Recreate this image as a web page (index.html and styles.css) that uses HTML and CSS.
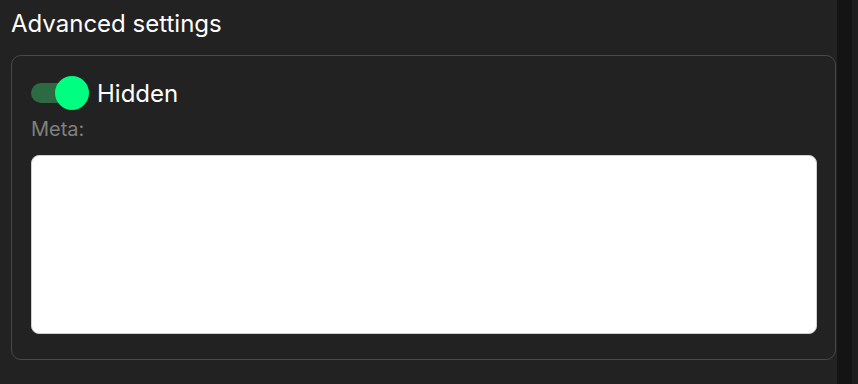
FILE: index.html
```html
<!doctype html>
<html>
<head>
    <meta charset="utf-8">
    <link rel="stylesheet" href="styles.css">
</head>
<body>
<div class="page">
    <div class="main">
        <h2 class="title">Advanced settings</h2>
        <div class="card">
            <label class="switch">
                <input type="checkbox" checked>
                <span class="track"><span class="thumb"></span></span>
                <span class="switch-label">Hidden</span>
            </label>
            <div class="field-label">Meta:</div>
            <textarea class="meta"></textarea>
        </div>
    </div>
    <div class="scroll-track"></div>
    <div class="edge"></div>
</div>
</body>
</html>
```

FILE: styles.css
```css
html, body {
    margin: 0;
    height: 100%;
    background: #222222;
    font-family: Inter, "Noto Sans", sans-serif;
    color: #ffffff;
}

.page {
    display: flex;
    height: 100%;
}

.main {
    flex: 1;
    padding: 0 1px 0 11px;
}

.title {
    margin: 0;
    padding-top: 9px;
    height: 55px;
    box-sizing: border-box;
    font-size: 24px;
    font-weight: 400;
    line-height: 30px;
}

.card {
    border: 1px solid #484848;
    border-radius: 10px;
    padding: 20px 18px 25px 19px;
}

.switch {
    display: flex;
    align-items: center;
    height: 34px;
}
.switch input {
    display: none;
}
.track {
    position: relative;
    width: 48px;
    height: 20px;
    border-radius: 10px;
    background: #2d6a44;
    margin-right: 10px;
}
.thumb {
    position: absolute;
    right: -10px;
    top: -7px;
    width: 34px;
    height: 34px;
    border-radius: 50%;
    background: #00ff80;
}
.switch-label {
    margin-left: 8px;
    font-size: 24px;
}

.field-label {
    color: #808080;
    font-size: 20px;
    line-height: 24px;
    margin-top: 7px;
    margin-bottom: 14px;
}

.meta {
    display: block;
    width: 100%;
    height: 179px;
    box-sizing: border-box;
    border: 1px solid #cfcfcf;
    border-radius: 8px;
    background: #ffffff;
    resize: none;
}

.scroll-track {
    width: 15px;
    background: #141414;
}
.edge {
    width: 6px;
    background: #1e1e1e;
}
```
